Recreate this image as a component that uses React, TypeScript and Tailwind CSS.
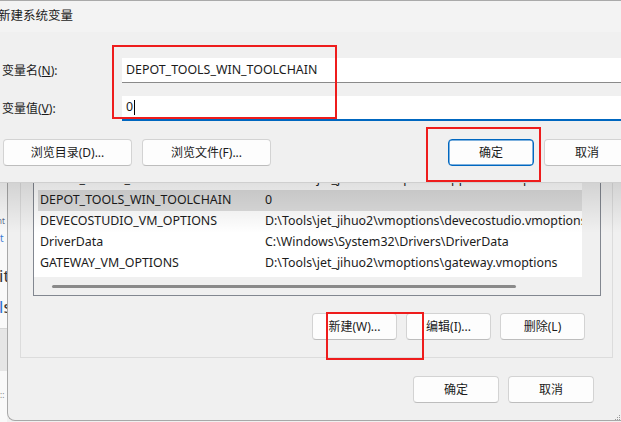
import React from 'react';

const font = { fontFamily: '"Segoe UI", "Noto Sans", "Noto Sans CJK SC", sans-serif' };

function Btn({ label, primary, className }: { label: string; primary?: boolean; className?: string }) {
  return (
    <div
      className={
        'h-[27px] flex items-center justify-center rounded-[4px] bg-[#fdfdfd] text-[12px] text-[#1b1b1b] border ' +
        (primary ? 'border-[#0067c0] shadow-[inset_0_0_0_0.5px_#0067c0] ' : 'border-[#d3d3d3] border-b-[#bdbdbd] ') +
        (className || '')
      }
    >
      {label}
    </div>
  );
}

const rows = [
  { name: 'DEPOT_TOOLS_UPDATE', value: 'D:\\Tools\\jet_jihuo2\\vmoptions\\appcode.vmoptions', partial: true },
  { name: 'DEPOT_TOOLS_WIN_TOOLCHAIN', value: '0', selected: true },
  { name: 'DEVECOSTUDIO_VM_OPTIONS', value: 'D:\\Tools\\jet_jihuo2\\vmoptions\\devecostudio.vmoptions' },
  { name: 'DriverData', value: 'C:\\Windows\\System32\\Drivers\\DriverData' },
  { name: 'GATEWAY_VM_OPTIONS', value: 'D:\\Tools\\jet_jihuo2\\vmoptions\\gateway.vmoptions' },
];

export default function App() {
  return (
    <div className="relative w-[621px] h-[422px] overflow-hidden bg-[#f0f0f0] text-[#1b1b1b]" style={font}>
      {/* New system variable dialog */}
      <div className="relative z-20 h-[183px] flex flex-col border-b border-[#cfcfcf]">
        <div className="h-[32px] bg-[#f3f3f3] border-t border-[#a9a9a9] flex items-center text-[12.5px] text-[#1b1b1b] -ml-[2px]">
          新建系统变量
        </div>
        <div className="flex-1 bg-[#f0f0f0] flex flex-col">
          <div className="flex items-center mt-[26px] h-[25px]">
            <div className="w-[122px] pl-[2px] text-[12px]">
              变量名(<span className="underline">N</span>):
            </div>
            <div className="flex-1 h-[25px] bg-white border-b border-[#8a8a8a] flex items-center pl-[4px] text-[12.4px]">
              DEPOT_TOOLS_WIN_TOOLCHAIN
            </div>
          </div>
          <div className="flex items-center mt-[13px] h-[25px]">
            <div className="w-[122px] pl-[2px] text-[12px]">
              变量值(<span className="underline">V</span>):
            </div>
            <div className="flex-1 h-[25px] bg-white border-b-2 border-[#0067c0] flex items-center pl-[4px] text-[12.4px]">
              0<span className="inline-block w-px h-[15px] bg-black ml-px" />
            </div>
          </div>
          <div className="flex items-center mt-[18px] px-[3px]">
            <Btn label="浏览目录(D)..." className="w-[129px]" />
            <Btn label="浏览文件(F)..." className="w-[129px] ml-[10px]" />
            <div className="flex-1" />
            <Btn label="确定" primary className="w-[86px]" />
            <Btn label="取消" className="w-[86px] ml-[10px] -mr-[12px]" />
          </div>
        </div>
        {/* annotation boxes */}
        <div className="absolute left-[112px] top-[45px] w-[225px] h-[74px] border-2 border-[#ee1c1c]" />
        <div className="absolute left-[426px] top-[127px] w-[115px] h-[55px] border-2 border-[#ee1c1c]" />
      </div>

      {/* Environment variables window behind */}
      <div className="flex h-[239px]">
        {/* strip of window further behind */}
        <div className="w-[7px] h-full bg-[#f9f9f9] flex flex-col overflow-hidden relative">
          <div className="mt-[34px] text-[8px] text-[#5a6a8a] -ml-[3px] leading-none">nt</div>
          <div className="mt-[8px] text-[10px] text-[#3a7bd5] leading-none">t</div>
          <div className="mt-[24px] text-[17px] text-[#333] -ml-[1px] leading-none">it</div>
          <div className="mt-[14px] text-[17px] text-[#333] leading-none -ml-[1px]">
            <span className="text-[#2f6fd0]">l</span>s
          </div>
          <div className="mt-[13px] h-[43px] bg-[#e6e6e6] border-t border-[#d6d6d6]" />
          <div className="mt-[20px] text-[8px] text-[#777] leading-none">::</div>
        </div>
        <div className="flex-1 h-[238px] border-l border-b border-[#a8a8a8] rounded-bl-[8px] bg-[#f0f0f0] flex flex-col pl-[12px] pr-[8px]">
          {/* group box */}
          <div className="h-[175px] border-l border-r border-b border-[#dcdcdc] pl-[12px] pr-[11px] flex flex-col">
            <div className="h-[113px] border-l border-r border-b border-[#828790] bg-[#f2f2f2] flex flex-col overflow-hidden">
              <div className="flex flex-1 min-h-0">
                <div className="w-[548px] bg-white pl-[4px] flex flex-col overflow-hidden">
                  <div className="-mt-[14px] flex flex-col">
                    {rows.map((r) => (
                      <div
                        key={r.name}
                        className={
                          'h-[21px] flex items-center text-[12.4px] whitespace-nowrap overflow-hidden ' +
                          (r.selected ? 'bg-[#dedede]' : '')
                        }
                      >
                        <div className="w-[227px] pl-[2px] shrink-0">{r.name}</div>
                        <div className="shrink-0">{r.value}</div>
                      </div>
                    ))}
                  </div>
                </div>
                <div className="flex-1 bg-[#f0f0f0]" />
              </div>
              <div className="h-[18px] bg-[#f0f0f0] flex items-center pl-[18px]">
                <div className="w-[464px] h-[3px] rounded-full bg-[#8a8a8a]" />
              </div>
            </div>
            <div className="flex mt-[17px] pl-[279px]">
              <Btn label="新建(W)..." className="w-[85px]" />
              <Btn label="编辑(I)..." className="w-[85px] ml-[9px]" />
              <Btn label="删除(L)" className="w-[85px] ml-[9px]" />
            </div>
          </div>
          <div className="flex mt-[18px] pl-[393px]">
            <Btn label="确定" className="w-[86px]" />
            <Btn label="取消" className="w-[86px] ml-[9px]" />
          </div>
        </div>
      </div>

      {/* shadow cast by the dialog */}
      <div className="absolute z-10 left-0 right-0 top-[183px] h-[50px] bg-gradient-to-b from-[rgba(0,0,0,0.12)] to-transparent pointer-events-none" />
      {/* annotation around 新建 */}
      <div className="absolute z-20 left-[326px] top-[312px] w-[98px] h-[48px] border-2 border-[#ee1c1c]" />
      {/* resize grip */}
      <div className="absolute right-[1px] bottom-[2px] grid grid-cols-3 gap-[1px]">
        {[0, 1, 2, 3, 4, 5, 6, 7, 8].map((i) => (
          <div key={i} className={'w-[1px] h-[1px] ' + (i === 0 || i === 1 || i === 3 ? 'bg-transparent' : 'bg-[#9a9a9a]')} />
        ))}
      </div>
    </div>
  );
}
